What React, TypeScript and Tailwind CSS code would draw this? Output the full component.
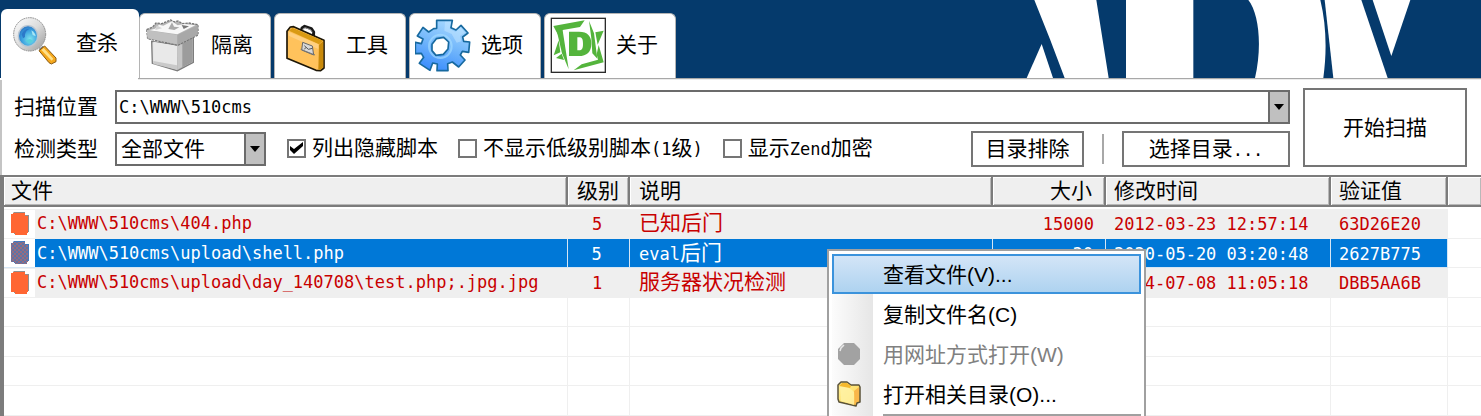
import React from "react";

const MONO = "font-['DejaVu_Sans_Mono','Noto_Sans_CJK_SC',monospace]";
const SANS = "font-['Liberation_Sans','Noto_Sans_CJK_SC',sans-serif]";

/** Sets runs of Latin text in the small fixed-width size and leaves CJK runs at the size around them. */
function Mixed({ text }: { text: string }) {
  const runs = text.match(/[\x20-\x7e]+|[^\x20-\x7e]+/g) ?? [];
  return (
    <>
      {runs.map((run, i) =>
        /^[\x20-\x7e]/.test(run) ? (
          <span key={i} className="text-[17px]">{run}</span>
        ) : (
          <React.Fragment key={i}>{run}</React.Fragment>
        )
      )}
    </>
  );
}

function MagnifierIcon() {
  return (
    <svg viewBox="30 48 168 168" className="size-14 shrink-0" aria-hidden="true">
      <defs>
        <linearGradient id="rim" x1="0" y1="0" x2="1" y2="1">
          <stop offset="0" stopColor="#ffffff" />
          <stop offset="0.5" stopColor="#dcdcdc" />
          <stop offset="1" stopColor="#9a9a9a" />
        </linearGradient>
        <radialGradient id="lens" cx="0.6" cy="0.65" r="0.7">
          <stop offset="0" stopColor="#7fe3ee" />
          <stop offset="0.6" stopColor="#3aa0df" />
          <stop offset="1" stopColor="#2b6fc0" />
        </radialGradient>
      </defs>
      <path d="M116 150l12-10 12 10-10 14z" fill="#7d8288" />
      <path d="M117 155l17-14 34 36v11l-14 7-7-4z" fill="#f5a81c" stroke="#8a5a14" strokeWidth="3" />
      <path d="M124 153l7-6 29 32-5 6z" fill="#ffe08a" />
      <ellipse cx="89" cy="106" rx="48" ry="50" fill="url(#rim)" stroke="#8c8c8c" strokeWidth="3" strokeDasharray="5 2" />
      <ellipse cx="84" cy="111" rx="29" ry="31" fill="url(#lens)" stroke="#b9c6d2" strokeWidth="4" />
      <path d="M65 106c4-12 14-18 24-17-10 5-15 12-14 25l-6 4z" fill="#2c79c9" />
      <path d="M94 94c8 4 12 11 13 18l-9-4z" fill="#a7e6f5" />
      <path d="M76 124l14-4 10 6-12 9z" fill="#58d0dc" />
    </svg>
  );
}

function BoxIcon() {
  return (
    <svg viewBox="435 48 168 168" className="size-14 shrink-0" aria-hidden="true">
      <path d="M455 121l74 11 51-23v75l-48 25-75-22z" fill="#dedede" stroke="#7d7d7d" strokeWidth="4" />
      <path d="M460 122l71 12v64l-71-13z" fill="#e9e9e9" />
      <path d="M460 180l71 13v13l-71-17z" fill="#c9c9c9" />
      <path d="M531 134l47-22v71l-46 24z" fill="#9c9c9c" />
      <path d="M531 136l16-8v70l-15 8z" fill="#c6c6c6" />
      <path d="M440 86l18-8 10-12 17 2 27-11 10 6 12-3 14 8 19-2 27 5v31l-61 31-90-20z" fill="#b4b4b4" stroke="#777" strokeWidth="4" strokeDasharray="7 3" />
      <path d="M447 88l18-5 12-12 13 3 26-13 17 12 20-4 33 4-54 27z" fill="#f7f7f7" />
      <path d="M440 87l92 15v28l-89-18z" fill="#c0c0c0" />
      <path d="M532 102l61-29v28l-61 30z" fill="#a8a8a8" />
      <path d="M516 64l6 13 16 2-15 8-18-3z" fill="#aaa" />
      <path d="M545 72l22 4-16 8z" fill="#777" />
      <path d="M470 73l16 9-20 5z" fill="#d2d2d2" />
    </svg>
  );
}

function BriefcaseIcon() {
  return (
    <svg viewBox="30 48 168 168" className="size-14 shrink-0" aria-hidden="true">
      <path d="M92 98l4-17 8-5 20 7 7 10-1 20" fill="none" stroke="#191919" strokeWidth="9" strokeLinejoin="round" />
      <path d="M95 96l4-13 7-3 16 6 5 8" fill="none" stroke="#8d8d8d" strokeWidth="3" />
      <path d="M51 91l10-13 10-1 91 41v83l-10 8-14-1-87-36z" fill="#ffc25c" stroke="#1d1606" strokeWidth="5" strokeLinejoin="round" />
      <path d="M57 89l10-9 92 39-12 11z" fill="#d99a13" />
      <path d="M147 131l13-11v79l-9 7-6-1z" fill="#c98a0b" />
      <path d="M56 92l89 38v14L56 104z" fill="#ffd080" />
      <path d="M98 124l29 11 4 27-36-15z" fill="#d8d8d8" stroke="#666" strokeWidth="3" />
      <path d="M103 134l12 11 12-3M103 145l5-6" fill="none" stroke="#555" strokeWidth="3" />
      <path d="M92 145l43 17" stroke="#777" strokeWidth="3" />
    </svg>
  );
}

function GearIcon() {
  return (
    <svg viewBox="435 48 168 168" className="size-14 shrink-0" aria-hidden="true">
      <defs>
        <linearGradient id="gear" x1="0.7" y1="0" x2="0.35" y2="1">
          <stop offset="0" stopColor="#a9daff" />
          <stop offset="0.5" stopColor="#73b7fb" />
          <stop offset="1" stopColor="#3b8dfc" />
        </linearGradient>
      </defs>
      <path
        d="M500 58H547L543 80 558 87 573 73 594 96 578 108 581 121 599 123 596 154 577 151 571 162 585 177 566 198 547 183 533 188 534 209H501L502 189 488 186 480 208 448 187 461 169 454 157 436 158V124L454 128 459 114 442 105 459 79 476 93 491 83 500 82Z"
        fill="url(#gear)"
        stroke="#17699f"
        strokeWidth="5"
        strokeLinejoin="round"
      />
      <path d="M525 62h18l-4 22 18 9 15-14 13 16-15 10 4 16-14 4-15-26-22-10z" fill="#c4e6ff" opacity="0.5" />
      <ellipse cx="511" cy="136" rx="34" ry="35" fill="none" stroke="#a8e0ff" strokeWidth="6" opacity="0.6" />
      <path d="M486 130l13-17 22-4 15 14-2 21-14 16-22 3-12-14z" fill="#fff" stroke="#17699f" strokeWidth="5" strokeLinejoin="round" />
    </svg>
  );
}

function AboutIcon() {
  return (
    <svg viewBox="837 48 168 168" className="size-14 shrink-0" aria-hidden="true">
      <rect x="841" y="52" width="162" height="162" fill="#fff" stroke="#2b2b2b" strokeWidth="4" />
      <g fill="#54b43c">
        <path d="M847 75l94-17-14 20-52 9-14 14z" />
        <path d="M856 84l18-2 9 58 10 65-20-48z" />
        <path d="M863 118l-15 45 20-9z" />
        <path d="M954 59l15 38 10 76-15-16-3-45z" />
        <path d="M973 94l25-5-18 42z" />
        <path d="M983 132l15 52-90 24 24-18 49-14-4-16z" />
        <path d="M872 158l-17 13 24 6z" />
        <path fillRule="evenodd" d="M894 92h30c26 0 37 14 37 36 0 24-13 37-38 37h-29zm25 17v39h5c9 0 12-6 12-20s-3-19-12-19z" />
      </g>
    </svg>
  );
}

function FileIcon({ selected }: { selected?: boolean }) {
  return (
    <svg viewBox="0 0 20 24" className="h-6 w-5 shrink-0" aria-hidden="true">
      <defs>
        <pattern id="dither" width="4" height="4" patternUnits="userSpaceOnUse">
          <rect width="4" height="4" fill="#5d74a6" />
          <path d="M0 0h2v2H0zM2 2h2v2H2z" fill="#966c80" />
        </pattern>
      </defs>
      <path d="M3 0h12v3h4v17h-3v2H4V1z" fill={selected ? "#3f79bf" : "#8f8f8f"} />
      <path d="M1 2h2V1h12v3h3v17h-1v2H5v-2H1z" fill={selected ? "url(#dither)" : "#ff6633"} />
    </svg>
  );
}

function Arrow() {
  return (
    <span className="pointer-events-none absolute inset-y-0 right-0 flex w-[22px] items-center justify-center border-2 border-[#6b6b6b] bg-[#c0c0c0]">
      <svg viewBox="0 0 10 6" className="h-[6px] w-[10px]" aria-hidden="true">
        <path d="M0 0h10L5 6z" fill="#000" />
      </svg>
    </span>
  );
}

function BannerLogo() {
  return (
    <svg viewBox="0 0 1443 234" className="ml-auto h-[78px] w-[481px] shrink-0" aria-hidden="true">
      <g fill="#fff">
        <path d="M80 234l45-102 34 102z" />
        <path d="M103 0h186l37 234H194L150 118z" />
        <path d="M378 0h202v234H378z" />
        <path d="M745 0c32 40 42 140 20 234h205c11-80 9-160-9-234z" />
        <path d="M974 0h110l79 234h-163z" />
        <path d="M1118 0h113l-57 168z" />
      </g>
    </svg>
  );
}

const tabs = [
  { label: "查杀", icon: <MagnifierIcon /> },
  { label: "隔离", icon: <BoxIcon /> },
  { label: "工具", icon: <BriefcaseIcon /> },
  { label: "选项", icon: <GearIcon /> },
  { label: "关于", icon: <AboutIcon /> },
];

function Banner() {
  return (
    <header className="flex h-[78px] shrink-0 items-end overflow-hidden bg-[#053a6c] pl-px">
      <div role="tablist" className="flex shrink-0 items-end">
        {tabs.map((tab, i) => (
          <button
            key={tab.label}
            role="tab"
            aria-selected={i === 0}
            className={
              i === 0
                ? "flex h-[69px] w-[138px] items-center gap-[10px] rounded-t-md bg-white pb-px pl-[9px]"
                : "mr-[3px] flex h-[65px] w-[132px] items-center gap-[10px] rounded-t-md border border-b-0 border-[#b4b4b4] bg-white pb-[3px] pl-[5px]"
            }
          >
            {tab.icon}
            {tab.label}
          </button>
        ))}
      </div>
      <BannerLogo />
    </header>
  );
}

function Check({ label, checked }: { label: string; checked?: boolean }) {
  return (
    <label className="flex items-center gap-[6px] whitespace-nowrap">
      <span className="grid size-[19px] shrink-0 place-items-center">
        <input
          type="checkbox"
          defaultChecked={checked}
          className="peer col-start-1 row-start-1 size-[19px] appearance-none border-2 border-[#757575] bg-white"
        />
        <svg viewBox="0 0 13 12" className="pointer-events-none col-start-1 row-start-1 hidden h-3 w-[13px] peer-checked:block" aria-hidden="true">
          <path d="M0 4l4 3 9-7v4l-9 8-4-4z" fill="#000" />
        </svg>
      </span>
      <span>
        <Mixed text={label} />
      </span>
    </label>
  );
}

function Controls() {
  return (
    <section className="flex shrink-0 gap-[13px] border-l-2 border-[#c4c4c4] pt-[9px] pr-[14px] pb-2 pl-3">
      <div className="flex min-w-0 flex-1 flex-col gap-[6px]">
        <div className="flex h-9 items-center">
          <label htmlFor="location" className="w-[101px] shrink-0">扫描位置</label>
          <div className="relative min-w-0 flex-1">
            <select
              id="location"
              className="block h-[34px] w-full appearance-none border-2 border-[#6b6b6b] bg-white pb-[3px] pl-[2px] text-[17px]"
            >
              <option>C:\WWW\510cms</option>
            </select>
            <Arrow />
          </div>
        </div>
        <div className="flex h-9 items-center">
          <label htmlFor="kind" className="w-[101px] shrink-0">检测类型</label>
          <div className="relative w-[151px] shrink-0">
            <select
              id="kind"
              className="block h-[34px] w-full appearance-none border-2 border-[#6b6b6b] bg-white pl-[4px] leading-none"
            >
              <option>全部文件</option>
            </select>
            <Arrow />
          </div>
          <div className="flex gap-5 pb-[2px] pl-[21px]">
            <Check label="列出隐藏脚本" checked />
            <Check label="不显示低级别脚本(1级)" />
            <Check label="显示Zend加密" />
          </div>
          <button className="ml-auto h-9 w-[113px] shrink-0 border-2 border-[#757575] bg-white">目录排除</button>
          <span className="mx-[18px] h-[30px] w-[2px] shrink-0 bg-[#a8a8a8]" />
          <button className="h-9 w-[168px] shrink-0 border-2 border-[#757575] bg-white">
            <Mixed text="选择目录..." />
          </button>
        </div>
      </div>
      <button className="-mt-px w-[164px] shrink-0 border-2 border-[#757575] bg-white">开始扫描</button>
    </section>
  );
}

const headers = ["文件", "级别", "说明", "大小", "修改时间", "验证值", ""];

const rows = [
  ["C:\\WWW\\510cms\\404.php", "5", "已知后门", "15000", "2012-03-23 12:57:14", "63D26E20"],
  ["C:\\WWW\\510cms\\upload\\shell.php", "5", "eval后门", "30", "2020-05-20 03:20:48", "2627B775"],
  ["C:\\WWW\\510cms\\upload\\day_140708\\test.php;.jpg.jpg", "1", "服务器状况检测", "1024", "2014-07-08 11:05:18", "DBB5AA6B"],
];

const align = [
  "pl-[7px] text-left",
  "pr-1 text-center",
  "pl-[9px] text-left",
  "pr-3 text-right",
  "pl-2 text-left",
  "pl-2 text-left",
  "",
];

function Results() {
  return (
    <div className="min-h-0 flex-1 overflow-hidden border-t-2 border-l-4 border-[#7c7c7c]">
      <table className="w-full table-fixed border-separate border-spacing-0">
        <colgroup>
          <col className="w-[564px]" />
          <col className="w-[62px]" />
          <col />
          <col className="w-[113px]" />
          <col className="w-[225px]" />
          <col className="w-[117px]" />
          <col className="w-[33px]" />
        </colgroup>
        <thead>
          <tr className="h-[30px]">
            {headers.map((h, i) => (
              <th
                key={i}
                className={`overflow-hidden border-r-2 border-b-2 border-[#7c7c7c] bg-[#efefef] p-0 leading-none font-normal whitespace-nowrap shadow-[inset_1px_1px_0_#fff,inset_-1px_-1px_0_#b8b8b8] last:border-r-0 ${i === 1 ? "text-center" : align[i]}`}
              >
                {h}
              </th>
            ))}
          </tr>
        </thead>
        <tbody>
          <tr className="h-[2px]">
            <td colSpan={7} className="p-0" />
          </tr>
          {rows.map((row, r) => {
            const selected = r === 1;
            const tone = selected ? "bg-[#0078d7] text-white" : "bg-[#efefef] text-[#c80000]";
            return (
              <tr key={r} className="h-[29px] even:h-[30px]">
                {row.map((cell, c) => (
                  <td
                    key={c}
                    className={`overflow-hidden border-b p-0 leading-none whitespace-nowrap ${selected ? "border-r border-[#d5e6f5]" : "border-[#efefef]"} ${tone} ${c === 0 ? "" : align[c]}`}
                  >
                    {c === 0 ? (
                      <span className="flex items-center">
                        <span className="flex h-7 w-[31px] shrink-0 items-center bg-white pl-[6px]">
                          <FileIcon selected={selected} />
                        </span>
                        <span className="pl-[2px] text-[17px]">{cell}</span>
                      </span>
                    ) : (
                      <Mixed text={cell} />
                    )}
                  </td>
                ))}
                <td className="border-b border-[#efefef] p-0" />
              </tr>
            );
          })}
          {[0, 1, 2, 3].map((r) => (
            <tr key={r} className="h-[29px] even:h-[30px]">
              {headers.map((_, c) => (
                <td key={c} className="border-r border-b border-[#efefef] p-0 last:border-r-0" />
              ))}
            </tr>
          ))}
        </tbody>
      </table>
    </div>
  );
}

function FolderIcon() {
  return (
    <svg viewBox="0 0 24 26" className="h-[26px] w-6" aria-hidden="true">
      <defs>
        <linearGradient id="folder" x1="0" y1="0" x2="1" y2="1">
          <stop offset="0" stopColor="#fff3a0" />
          <stop offset="0.6" stopColor="#ffe06a" />
          <stop offset="1" stopColor="#f4a93a" />
        </linearGradient>
      </defs>
      <path d="M1 4l3-3 6 0 4 3 8 0 1 2v15l-3 1-1 3-4-1-13-3-1-3z" fill="url(#folder)" stroke="#5a5238" strokeWidth="1.5" strokeLinejoin="round" />
      <path d="M3 4l7 2 5 3 2 2v13l-13-4z" fill="#fff2a6" opacity="0.8" />
      <path d="M2 5l3-3h5l4 3-1 2z" fill="#f5b92e" />
      <path d="M17 10l5-4v14l-3 1-1 3z" fill="#f9b64a" />
    </svg>
  );
}

function DotIcon() {
  return (
    <svg viewBox="0 0 24 24" className="size-6" aria-hidden="true">
      <path d="M7 1h10l6 6v10l-6 6H7l-6-6V7z" fill="#a2a2a2" />
      <path d="M3 9l1-3 3-3" fill="none" stroke="#e8e8e8" strokeWidth="1.5" />
    </svg>
  );
}

const menuItems = [
  { label: "查看文件(V)...", icon: null },
  { label: "复制文件名(C)", icon: null },
  { label: "用网址方式打开(W)", icon: <DotIcon />, disabled: true },
  { label: "打开相关目录(O)...", icon: <FolderIcon /> },
];

function ContextMenu() {
  return (
    <div role="menu" className={`absolute top-[249px] left-[827px] w-[319px] border-2 border-[#a0a0a0] bg-white p-[3px] pb-0 ${SANS}`}>
      <div className="bg-linear-to-r from-[#fcfcfc] to-[#e6e6e6] bg-[length:41px_100%] bg-no-repeat">
        {menuItems.map((item, i) => (
          <button
            key={item.label}
            role="menuitem"
            disabled={item.disabled}
            className={`flex h-10 w-full items-center border-2 pl-[3px] text-left leading-none whitespace-nowrap ${
              i === 0
                ? "border-[#3b93dc] bg-linear-to-b from-[#d3e5f7] to-[#aed3f0] text-black"
                : "border-transparent text-black disabled:text-[#808080]"
            }`}
          >
            <span className="w-[46px] shrink-0">{item.icon}</span>
            {item.label}
          </button>
        ))}
        <div className="flex h-10 pl-[51px]">
          <span className="h-[2px] flex-1 bg-[#a0a0a0]" />
        </div>
      </div>
    </div>
  );
}

export default function App() {
  return (
    <main className={`relative flex h-screen flex-col overflow-hidden bg-white text-[21px] leading-[30px] text-black ${MONO}`}>
      <Banner />
      <div className="ml-[138px] h-[2px] shrink-0 border-t border-[#a8a8a8] bg-[#ececec]" />
      <Controls />
      <Results />
      <ContextMenu />
    </main>
  );
}
